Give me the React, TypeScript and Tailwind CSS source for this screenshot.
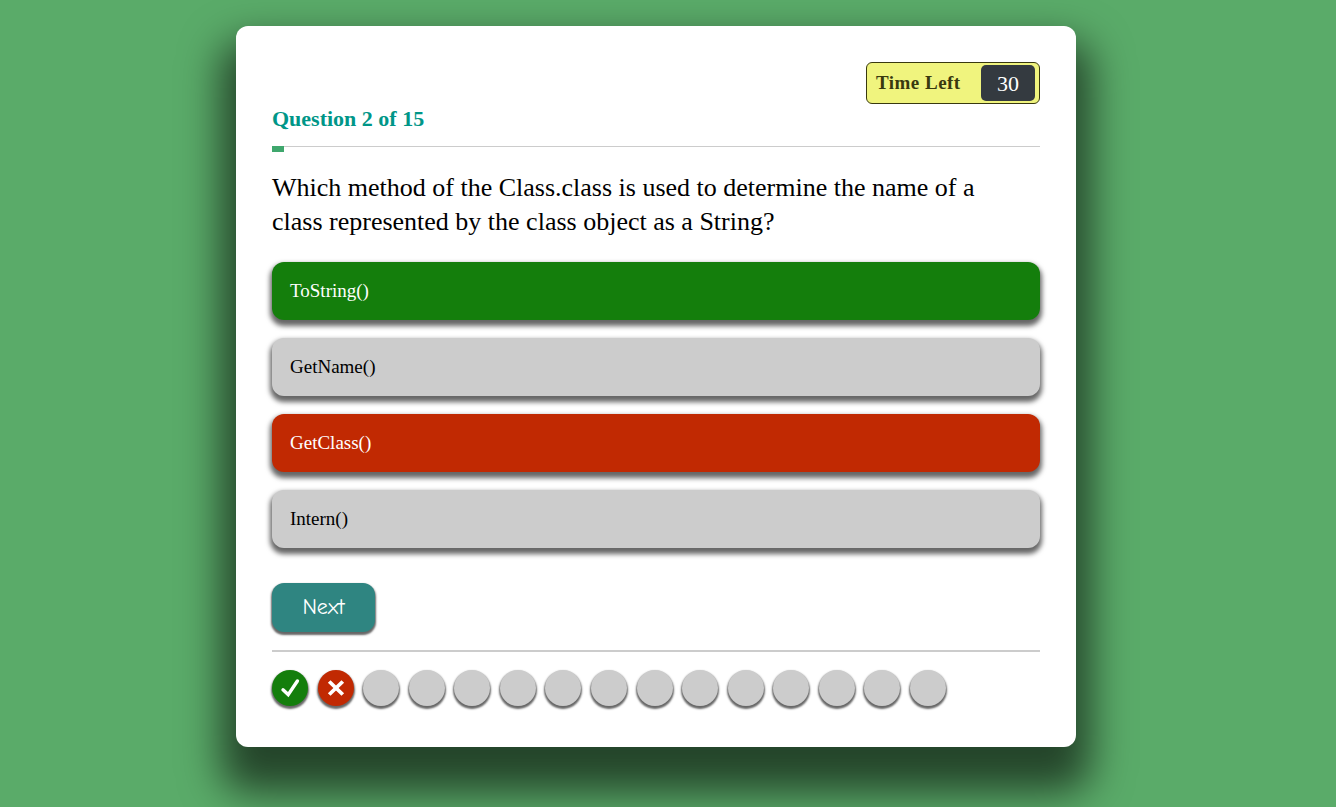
const TOTAL = 15;
const current = 2;

const options = [
  { label: "ToString()", tone: "bg-[#147e0c] text-white" },
  { label: "GetName()", tone: "bg-[#cccccc] text-black" },
  { label: "GetClass()", tone: "bg-[#c12902] text-white" },
  { label: "Intern()", tone: "bg-[#cccccc] text-black" },
];

const results: string[] = ["correct", "wrong"];

function Check() {
  return (
    <svg viewBox="0 0 36 36" className="size-full" aria-hidden="true">
      <path d="M11 19.8 L16.2 24.6 L25.4 11" fill="none" stroke="white" strokeWidth="3.4" strokeLinecap="round" />
    </svg>
  );
}

function Cross() {
  return (
    <svg viewBox="0 0 36 36" className="size-full" aria-hidden="true">
      <path d="M11.2 11.5 L24.8 24.5 M24.8 11.5 L11.2 24.5" fill="none" stroke="white" strokeWidth="3.8" />
    </svg>
  );
}

function Marker({ result }: { result?: string }) {
  const tone = result === "correct" ? "bg-[#147e0c]" : result === "wrong" ? "bg-[#c12902]" : "bg-[#cccccc]";
  return (
    <li className={`size-9 shrink-0 rounded-full shadow-[0_2px_2px_1px_rgba(0,0,0,0.6)] ${tone}`}>
      {result === "correct" && <Check />}
      {result === "wrong" && <Cross />}
    </li>
  );
}

export default function App() {
  return (
    <div className="min-h-screen overflow-hidden bg-[#5aab69] px-6 pt-[26px] pb-[60px] font-['Liberation_Serif',serif] text-black">
      <main className="mx-auto max-w-[840px] rounded-xl bg-white p-9 shadow-[0_30px_40px_15px_rgba(0,0,0,0.6)] min-[1200px]:relative min-[1200px]:right-3">
        <div className="flex justify-end">
          <div className="flex h-[42px] w-[174px] items-center justify-between rounded-md border border-[#39390f] bg-[#f0f47e] pr-1 pl-[9px]">
            <span className="text-[19px] font-bold tracking-wide text-[#39390f]">Time Left</span>
            <span className="flex h-9 w-[54px] items-center justify-center rounded-[5px] bg-[#343a40] text-[22px] text-white">30</span>
          </div>
        </div>
        <h1 className="text-[22px] leading-[30px] font-bold text-[#009688]">
          Question {current} of {TOTAL}
        </h1>
        <div className="mt-3 h-[6px] border-t border-[#cccccc]">
          <div className="-mt-px h-[6px] w-3 bg-[#3fa76d]" />
        </div>
        <h2 className="mt-[19px] pr-10 text-[26px] leading-[34px]">
          Which method of the Class.class is used to determine the name of a class represented by the class object as a String?
        </h2>
        <div className="mt-[23px] flex flex-col gap-[18px]">
          {options.map((o) => (
            <button
              key={o.label}
              type="button"
              className={`h-[58px] rounded-xl px-[18px] text-left text-[19px] shadow-[0_4px_5px_2px_rgba(0,0,0,0.6)] ${o.tone}`}
            >
              {o.label}
            </button>
          ))}
        </div>
        <button
          type="button"
          className="mt-[35px] block h-[49px] w-[103px] rounded-xl bg-[#2f8581] font-['Comic_Neue','Comic_Sans_MS',Lato,sans-serif] text-[22px] text-white shadow-[0_2px_2px_1px_rgba(0,0,0,0.6)]"
        >
          Next
        </button>
        <hr className="mt-[18px] border-t-2 border-[#cccccc]" />
        <ol className="mt-[18px] flex max-w-[674px] flex-wrap justify-between pb-[5px]" aria-label="Answers">
          {Array.from({ length: TOTAL }, (_, i) => (
            <Marker key={i} result={results[i]} />
          ))}
        </ol>
      </main>
    </div>
  );
}
